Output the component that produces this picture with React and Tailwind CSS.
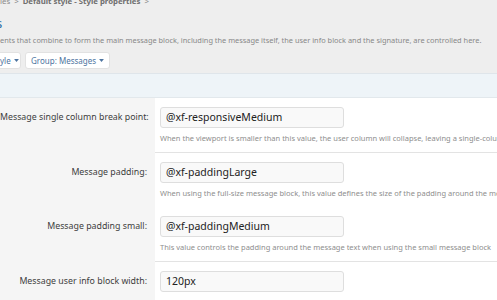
import React from "react"

const rows = [
    {
        label: "Message single column break point:",
        value: "@xf-responsiveMedium",
        hint: "When the viewport is smaller than this value, the user column will collapse, leaving a single-column layout.",
        border: true,
    },
    {
        label: "Message padding:",
        value: "@xf-paddingLarge",
        hint: "When using the full-size message block, this value defines the size of the padding around the message content.",
        border: false,
    },
    {
        label: "Message padding small:",
        value: "@xf-paddingMedium",
        hint: "This value controls the padding around the message text when using the small message block",
        border: true,
    },
    {
        label: "Message user info block width:",
        value: "120px",
        hint: "Controls the width of the left-hand user info block in the full-size message block.",
        border: false,
    },
]

const Caret = () => (
    <svg viewBox="0 0 8 5" className="w-[5px] h-[3px] ml-[3px] fill-current">
        <path d="M0 0h8L4 5z" />
    </svg>
)

const FormRow = ({ label, value, hint, border }) => (
    <div className="grid grid-cols-[155px_1fr]">
        <div className="bg-[#f5f5f5] pr-[8px] pt-[13px] text-right text-[8.8px] leading-[13px] text-[#3d3d3d] whitespace-nowrap">
            {label}
        </div>
        <div className={border ? "pl-[5px] pt-[9px] pb-[7px] border-b border-[#e3e3e3]" : "pl-[5px] pt-[9px] pb-[7px]"}>
            <div className="w-[184px] h-[21px] flex items-center px-[5px] bg-[#f9f9f9] border border-[#dedede] rounded-[3px] text-[10.5px] text-[#222]">
                {value}
            </div>
            <div className="mt-[4px] h-[13px] text-[7.5px] leading-[13px] text-[#8e8e8e] whitespace-nowrap">
                {hint}
            </div>
        </div>
    </div>
)

export default function App() {
    return (
        <div className="w-[497px] h-[300px] overflow-hidden bg-[#eeeeee] font-['Noto_Sans',sans-serif]">
            {/* Breadcrumb */}
            <div className="-mt-[4px] h-[12px] flex items-center gap-[4px] text-[7.8px] text-[#8a8a8a] whitespace-nowrap">
                <span>les</span>
                <span>&gt;</span>
                <span className="font-bold text-[#6e6e6e]">Default style - Style properties</span>
                <span>&gt;</span>
            </div>

            {/* Title */}
            <div className="h-[27px] -ml-[4px] text-[13px] leading-[30px] text-[#2b6ca3]">s</div>

            {/* Description */}
            <div className="h-[10px] text-[7.4px] leading-[10px] text-[#888] whitespace-nowrap">
                ents that combine to form the main message block, including the message itself, the user info block and the signature, are controlled here.
            </div>

            {/* Filter buttons */}
            <div className="mt-[7px] flex gap-[4px] text-[8px] text-[#4d74a0]">
                <button className="w-[24px] -ml-[3px] h-[17px] pl-[2px] flex items-center justify-start bg-white border border-[#e2e2e2] rounded-[3px]">
                    yle<Caret />
                </button>
                <button className="h-[17px] px-[5px] flex items-center bg-white border border-[#e2e2e2] rounded-[3px]">
                    Group: Messages<Caret />
                </button>
            </div>

            {/* Form block */}
            <div className="mt-[4px] border-t border-[#dfe5ea] bg-white">
                <div className="h-[24px] bg-[#eef4f8] border-b border-[#e2e8ec]" />
                {rows.map((r) => (
                    <FormRow key={r.label} {...r} />
                ))}
            </div>
        </div>
    )
}
